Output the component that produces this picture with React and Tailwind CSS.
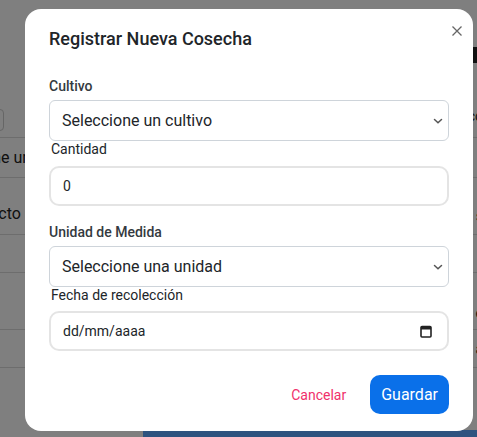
import { useState } from "react";

function Chevron() {
  return (
    <svg width="10" height="10" viewBox="0 0 10 10" className="text-[#555]">
      <path d="M1.5 3.5 L5 6.8 L8.5 3.5" fill="none" stroke="currentColor" strokeWidth="1.5" strokeLinecap="round" />
    </svg>
  );
}

function CalendarIcon() {
  return (
    <svg width="12" height="13" viewBox="0 0 12 13" className="text-[#222]">
      <rect x="1" y="1.5" width="10" height="10.5" rx="1" fill="none" stroke="currentColor" strokeWidth="1.6" />
      <rect x="1" y="1.5" width="10" height="3" fill="currentColor" />
    </svg>
  );
}

function FakeSelect({ label }) {
  return (
    <div className="flex h-[41px] items-center justify-between rounded-md border border-[#ced4da] bg-white pl-3 pr-[5px] text-base text-[#212529]">
      <span>{label}</span>
      <Chevron />
    </div>
  );
}

function BackgroundPage() {
  const rows = [
    { h: 40, left: "Seleccione un", offset: "ml-[-68px]", align: "items-center", right: "l" },
    { h: 57, left: "Producto (kg)", offset: "ml-[-44px]", align: "items-end pb-[8px]", right: "s" },
    { h: 38, left: "", offset: "", align: "items-center", right: "" },
    { h: 57, left: "", offset: "", align: "items-end pb-[6px]", right: "e" },
    { h: 38, left: "", offset: "", align: "items-center", right: "a" },
  ];
  return (
    <div className="h-[437px] w-full overflow-hidden bg-white text-[#222]">
      <div className="h-[47px]" />
      <div className="flex h-[16px] justify-end">
        <span className="mr-[-6px] w-[10px] bg-[#222]" />
      </div>
      <div className="flex h-[75px] items-end justify-between border-b border-[#dadada] pb-[6px]">
        <div className="ml-[-40px] h-[22px] w-[44px] rounded border border-[#ccc]" />
        <span className="mr-[-6px] pb-[5px] text-sm">co</span>
      </div>
      {rows.map((row, i) => (
        <div
          key={i}
          className={`flex justify-between border-b border-[#dadada] text-base ${row.align}`}
          style={{ height: row.h }}
        >
          <span className={row.offset}>{row.left}</span>
          <span className="mr-[-6px] text-sm">{row.right}</span>
        </div>
      ))}
      <div className="ml-[143px] mt-[62px] h-[20px] bg-[#5ca6ff]" />
    </div>
  );
}

export default function App() {
  const [cantidad, setCantidad] = useState("0");

  return (
    <div className="relative h-[437px] w-[477px] overflow-hidden font-['Segoe_UI','Roboto',sans-serif]">
      <BackgroundPage />
      <div className="absolute inset-0 bg-black/50" />

      <div className="absolute left-[25px] top-[9px] flex h-[422px] w-[448px] flex-col rounded-2xl bg-white px-6 pt-[15px]">
        <div className="flex items-start justify-between">
          <h2 className="text-[18px] font-medium leading-[30px] text-[#212529]">Registrar Nueva Cosecha</h2>
          <button type="button" className="mr-[-14px] mt-[1px] text-[#666]" title="Cerrar">
            <svg width="12" height="12" viewBox="0 0 12 12">
              <path d="M1.5 1.5 L10.5 10.5 M10.5 1.5 L1.5 10.5" stroke="currentColor" strokeWidth="1.3" />
            </svg>
          </button>
        </div>

        <label className="mt-[22px] mb-[3px] text-sm font-medium leading-[21px] text-[#343a40]">Cultivo</label>
        <FakeSelect label="Seleccione un cultivo" />

        <label className="ml-[2px] text-sm leading-[17px] text-[#212529]">Cantidad</label>
        <input
          type="text"
          value={cantidad}
          onChange={(e) => setCantidad(e.target.value)}
          className="mt-[8px] h-[40px] rounded-[10px] border-2 border-[#e4e4e4] px-3 text-sm text-[#212529] outline-none"
        />

        <label className="mt-[16px] mb-[3px] text-sm font-medium leading-[21px] text-[#343a40]">Unidad de Medida</label>
        <FakeSelect label="Seleccione una unidad" />

        <label className="ml-[2px] text-sm leading-[17px] text-[#212529]">Fecha de recolección</label>
        <div className="mt-[7px] flex h-[40px] items-center justify-between rounded-[10px] border-2 border-[#e4e4e4] pl-3 pr-[15px] text-sm text-[#212529]">
          <span>dd/mm/aaaa</span>
          <CalendarIcon />
        </div>

        <div className="mt-[24px] flex items-center justify-end gap-6">
          <button type="button" className="text-sm text-[#f0306b]">
            Cancelar
          </button>
          <button type="button" className="h-[39px] rounded-[10px] bg-[#0a70e9] px-[11px] text-base text-white">
            Guardar
          </button>
        </div>
      </div>
    </div>
  );
}
